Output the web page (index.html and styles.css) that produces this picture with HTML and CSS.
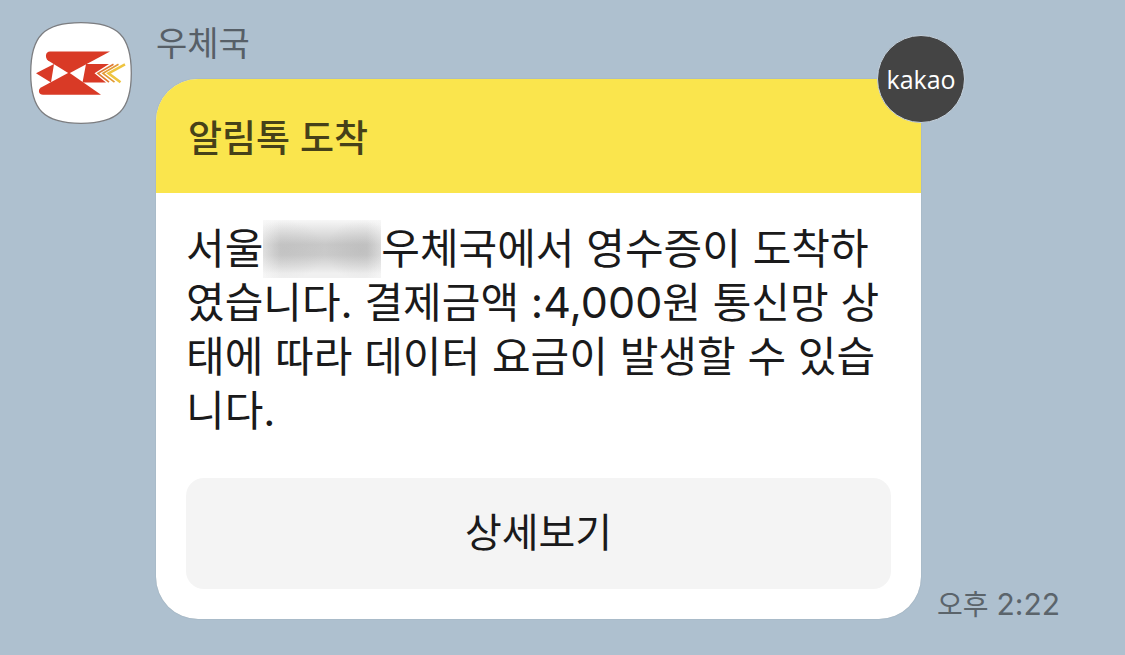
FILE: index.html
```html
<!DOCTYPE html>
<html lang="ko">
<head>
<meta charset="utf-8">
<meta name="viewport" content="width=device-width, initial-scale=1">
<title>우체국</title>
<link rel="stylesheet" href="styles.css">
</head>
<body>
<main class="chat">
  <svg class="avatar" viewBox="0 0 102 102" role="img" aria-label="우체국 프로필">
    <path d="M51 .7C88 .7 101.300 14 101.300 51S88 101.300 51 101.300.7 88 .7 51 14 .7 51 .7Z" fill="#fff" stroke="#7c7d80" stroke-width="1.300"/>
    <path d="M20 29.500H80L39 51.500 18 38.500C14.500 35.500 15.500 29.500 20 29.500Z" fill="#d93a26"/>
    <path d="M39 50.500 71 72.800H13C8.500 72.800 7.500 67.500 11 65.500Z" fill="#d93a26"/>
    <path d="M6 51.300 24 42 21 60.500Z" fill="#d93a26"/>
    <path d="M56 42H79L64.500 51.300 76 60.500H52.500Z" fill="#d93a26"/>
    <path d="M83.500 42.300 68 51.300 79 60.200" fill="none" stroke="#df7a32" stroke-width="1.700"/>
    <path d="M88.500 42.300 73 51.300 84.500 60.200" fill="none" stroke="#e39a35" stroke-width="1.700"/>
    <path d="M95 42.300 78.500 51.300 90.500 60.200" fill="none" stroke="#eec440" stroke-width="2.500"/>
  </svg>
  <section class="thread">
    <h1 class="sender">우체국</h1>
    <div class="message">
      <article class="bubble">
        <span class="badge">kakao</span>
        <h2 class="bubble-title">알림톡 도착</h2>
        <div class="bubble-body">
          <p class="text">서울<span class="masked"></span>우체국에서 영수증이 도착하였습니다. 결제금액 <span class="amount">:4,000</span>원 통신망 상태에 따라 데이터 요금이 발생할 수 있습니다.</p>
          <button class="detail" type="button">상세보기</button>
        </div>
      </article>
      <time class="time" datetime="14:22">오후 <span class="clock">2:22</span></time>
    </div>
  </section>
</main>
</body>
</html>
```
FILE: styles.css
```css
* {
  box-sizing: border-box;
}

body {
  margin: 0;
  min-height: 100vh;
  background: #aec0cf;
  color: #1a1a1b;
  font-family: Inter, "Noto Sans CJK KR", sans-serif;
}

.chat {
  display: flex;
  align-items: flex-start;
  gap: 24px;
  padding: 22px 65px 36px 30px;
}

.avatar {
  flex: none;
  width: 102px;
  height: 102px;
}

.thread {
  flex: 1;
  min-width: 0;
}

.sender {
  margin: 0;
  padding-bottom: 13px;
  color: #575f67;
  font-size: 34px;
  font-weight: 400;
  line-height: 44px;
}

.message {
  display: flex;
  align-items: flex-end;
  gap: 16px;
}

.bubble {
  position: relative;
  flex: 1;
  min-width: 0;
  border-radius: 42px;
  background: #fff;
  box-shadow: 0 0 1px #7f909d;
}

.badge {
  position: absolute;
  top: -44px;
  right: -44px;
  display: flex;
  align-items: center;
  justify-content: center;
  width: 88px;
  height: 88px;
  border: 1px solid #c5d1dc;
  border-radius: 50%;
  background: #444;
  color: #fff;
  font: 500 25px/32px "Open Sans", sans-serif;
}

.bubble-title {
  margin: 0;
  padding: 36px 32px 30px;
  border-radius: 42px 42px 0 0;
  background: #fae54d;
  color: #464119;
  font-size: 37px;
  font-weight: 500;
  line-height: 48px;
}

.bubble-body {
  padding: 29px 30px 30px;
}

.text {
  margin: 0 0 40px;
  font-size: 42px;
  line-height: 54px;
  word-break: break-all;
}

.amount {
  font-size: 43px;
  line-height: 1;
}

.masked {
  display: inline-block;
  width: 118px;
  height: 58px;
  margin: -8px 0;
  vertical-align: -6px;
  background:
    radial-gradient(ellipse 40px 30px at 22px 30px, rgba(180, 180, 180, .3), transparent),
    radial-gradient(ellipse 36px 30px at 98px 30px, rgba(170, 170, 170, .3), transparent),
    linear-gradient(90deg, rgba(250, 250, 250, .6), transparent 15% 88%, rgba(250, 250, 250, .5)),
    linear-gradient(#f7f7f7, #c8c8c8 42%, #cacaca 60%, #f0f0f0 92%);
}

.detail {
  display: block;
  width: 100%;
  padding: 27px 16px 28px;
  border: 0;
  border-radius: 18px;
  background: #f4f4f4;
  color: inherit;
  font: inherit;
  font-size: 40px;
  line-height: 56px;
}

.time {
  flex: none;
  color: #5b646b;
  font-size: 28px;
  font-weight: 400;
  line-height: 28px;
}

.clock {
  font-size: 30px;
  line-height: 1;
}
```
